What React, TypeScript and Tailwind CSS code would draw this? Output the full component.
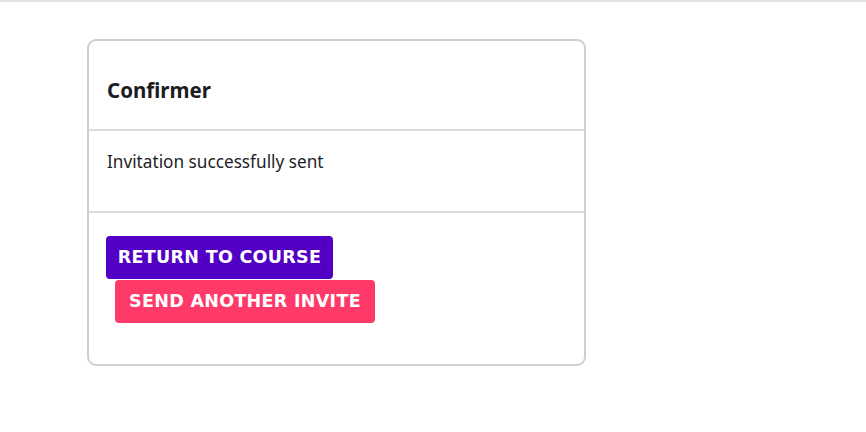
import React from "react";

export default function App() {
  return (
    <div className="min-h-[432px] w-full bg-white" style={{ fontFamily: '"Noto Sans", "Open Sans", sans-serif' }}>
      <div className="h-[2px] w-full bg-[#e3e3e6]" />
      <div className="pl-[87px] pt-[37px]">
        <div className="w-[499px] rounded-[9px] border-2 border-[#cfcfcf] bg-white">
          <div className="h-[90px] border-b-2 border-[#dcdcdc] px-[18px] pt-[37px]">
            <h1 className="text-[20.5px] font-bold leading-[24px] text-[#1c1c1f]">Confirmer</h1>
          </div>
          <div className="h-[82px] border-b-2 border-[#dcdcdc] px-[18px] pt-[19px]">
            <p className="text-[17.2px] leading-[24px] text-[#222226]">Invitation successfully sent</p>
          </div>
          <div className="flex flex-col items-start px-[17px] pb-[41px] pt-[23px]">
            <button
              className="h-[43px] w-[227px] rounded-[4px] bg-[#5200c4] text-[17.5px] font-bold tracking-[0.3px] text-white"
              style={{ fontFamily: '"DejaVu Sans", Verdana, sans-serif' }}
            >
              RETURN TO COURSE
            </button>
            <button
              className="ml-[9px] mt-[1px] h-[43px] w-[260px] rounded-[4px] bg-[#ff3a69] text-[17.5px] font-bold tracking-[0.3px] text-white"
              style={{ fontFamily: '"DejaVu Sans", Verdana, sans-serif' }}
            >
              SEND ANOTHER INVITE
            </button>
          </div>
        </div>
      </div>
    </div>
  );
}
